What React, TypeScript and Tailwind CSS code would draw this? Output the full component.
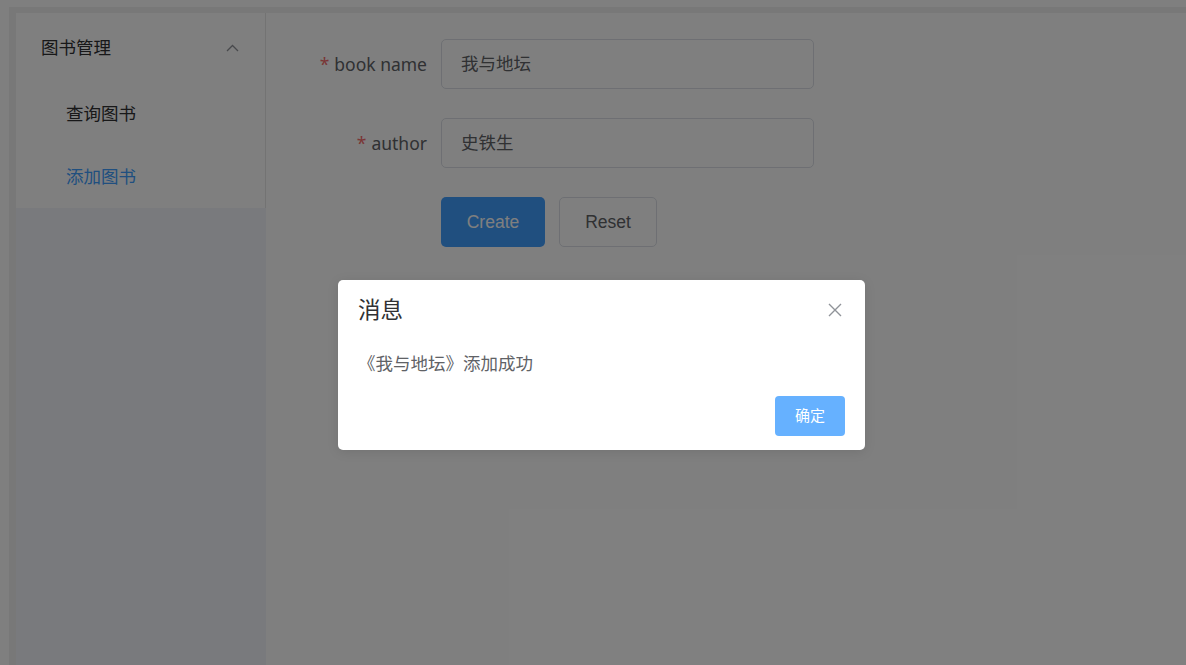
const font = { fontFamily: '"Liberation Sans", "Noto Sans CJK SC", sans-serif' };
const labelFont = { fontFamily: '"Noto Sans", "Noto Sans CJK SC", sans-serif' };

const ChevronUp = () => (
  <svg width="13" height="8" viewBox="0 0 13 8" fill="none">
    <path d="M1 7L6.5 1.5L12 7" stroke="#909399" strokeWidth="1.3" />
  </svg>
);

const CloseIcon = () => (
  <svg width="14" height="14" viewBox="0 0 14 14" fill="none">
    <path d="M1 1L13 13M13 1L1 13" stroke="#909399" strokeWidth="1.4" />
  </svg>
);

const Field = ({ label, value }: { label: string; value: string }) => (
  <div className="flex items-center h-[50px]">
    <label className="w-[161px] text-right text-[17.5px] text-[#606266]" style={labelFont}>
      <span className="text-[#f56c6c] mr-[5px]">*</span>
      {label}
    </label>
    <div className="ml-[14px] w-[373px] h-[50px] flex items-center border border-[#dcdfe6] rounded-[5px] px-[19px] text-[17.5px] text-[#606266]">
      {value}
    </div>
  </div>
);

export default function App() {
  return (
    <div className="relative w-full h-[665px] bg-white pt-[7px] pl-[9px] overflow-hidden" style={font}>
      <div className="h-full bg-[#f0f0f0] pt-[6px] pl-[7px] flex">
        {/* Sidebar */}
        <aside className="w-[250px] h-full bg-[#f2f5fa] flex flex-col">
          <div className="bg-white border-r border-[#e6e6e6]">
            <div className="h-[70px] flex items-center justify-between pl-[25px] pr-[26px] text-[17.5px] text-[#303133]">
              <span>图书管理</span>
              <ChevronUp />
            </div>
            <div className="h-[63px] flex items-center pl-[50px] text-[17.5px] text-[#303133]">查询图书</div>
            <div className="h-[62px] flex items-center pl-[50px] text-[17.5px] text-[#409eff]">添加图书</div>
          </div>
        </aside>

        {/* Main */}
        <main className="flex-1 h-full bg-white pt-[26px]">
          <div className="flex flex-col gap-[29px]">
            <Field label="book name" value="我与地坛" />
            <Field label="author" value="史铁生" />
            <div className="flex items-center pl-[175px]">
              <button className="w-[104px] h-[50px] rounded-[5px] bg-[#409eff] text-white text-[17.5px]">Create</button>
              <button className="ml-[14px] w-[98px] h-[50px] rounded-[5px] border border-[#dcdfe6] bg-white text-[#606266] text-[17.5px]">Reset</button>
            </div>
          </div>
        </main>
      </div>

      {/* Overlay */}
      <div className="absolute inset-0 bg-black/50" />

      {/* Message box */}
      <div className="absolute left-[338px] top-[280px] w-[527px] h-[170px] bg-white rounded-[5px] shadow-[0_2px_12px_rgba(0,0,0,0.1)] flex flex-col px-[20px]">
        <div className="relative pt-[19px]">
          <div className="leading-[24px] text-[22.5px] text-[#303133]">消息</div>
          <button className="absolute right-[3px] top-[23px] flex">
            <CloseIcon />
          </button>
        </div>
        <div className="mt-[29px] leading-[24px] text-[17.5px] text-[#606266]">《我与地坛》添加成功</div>
        <div className="mt-[20px] flex justify-end">
          <button className="w-[70px] h-[40px] rounded-[4px] bg-[#66b1ff] text-white text-[15px]">确定</button>
        </div>
      </div>
    </div>
  );
}
